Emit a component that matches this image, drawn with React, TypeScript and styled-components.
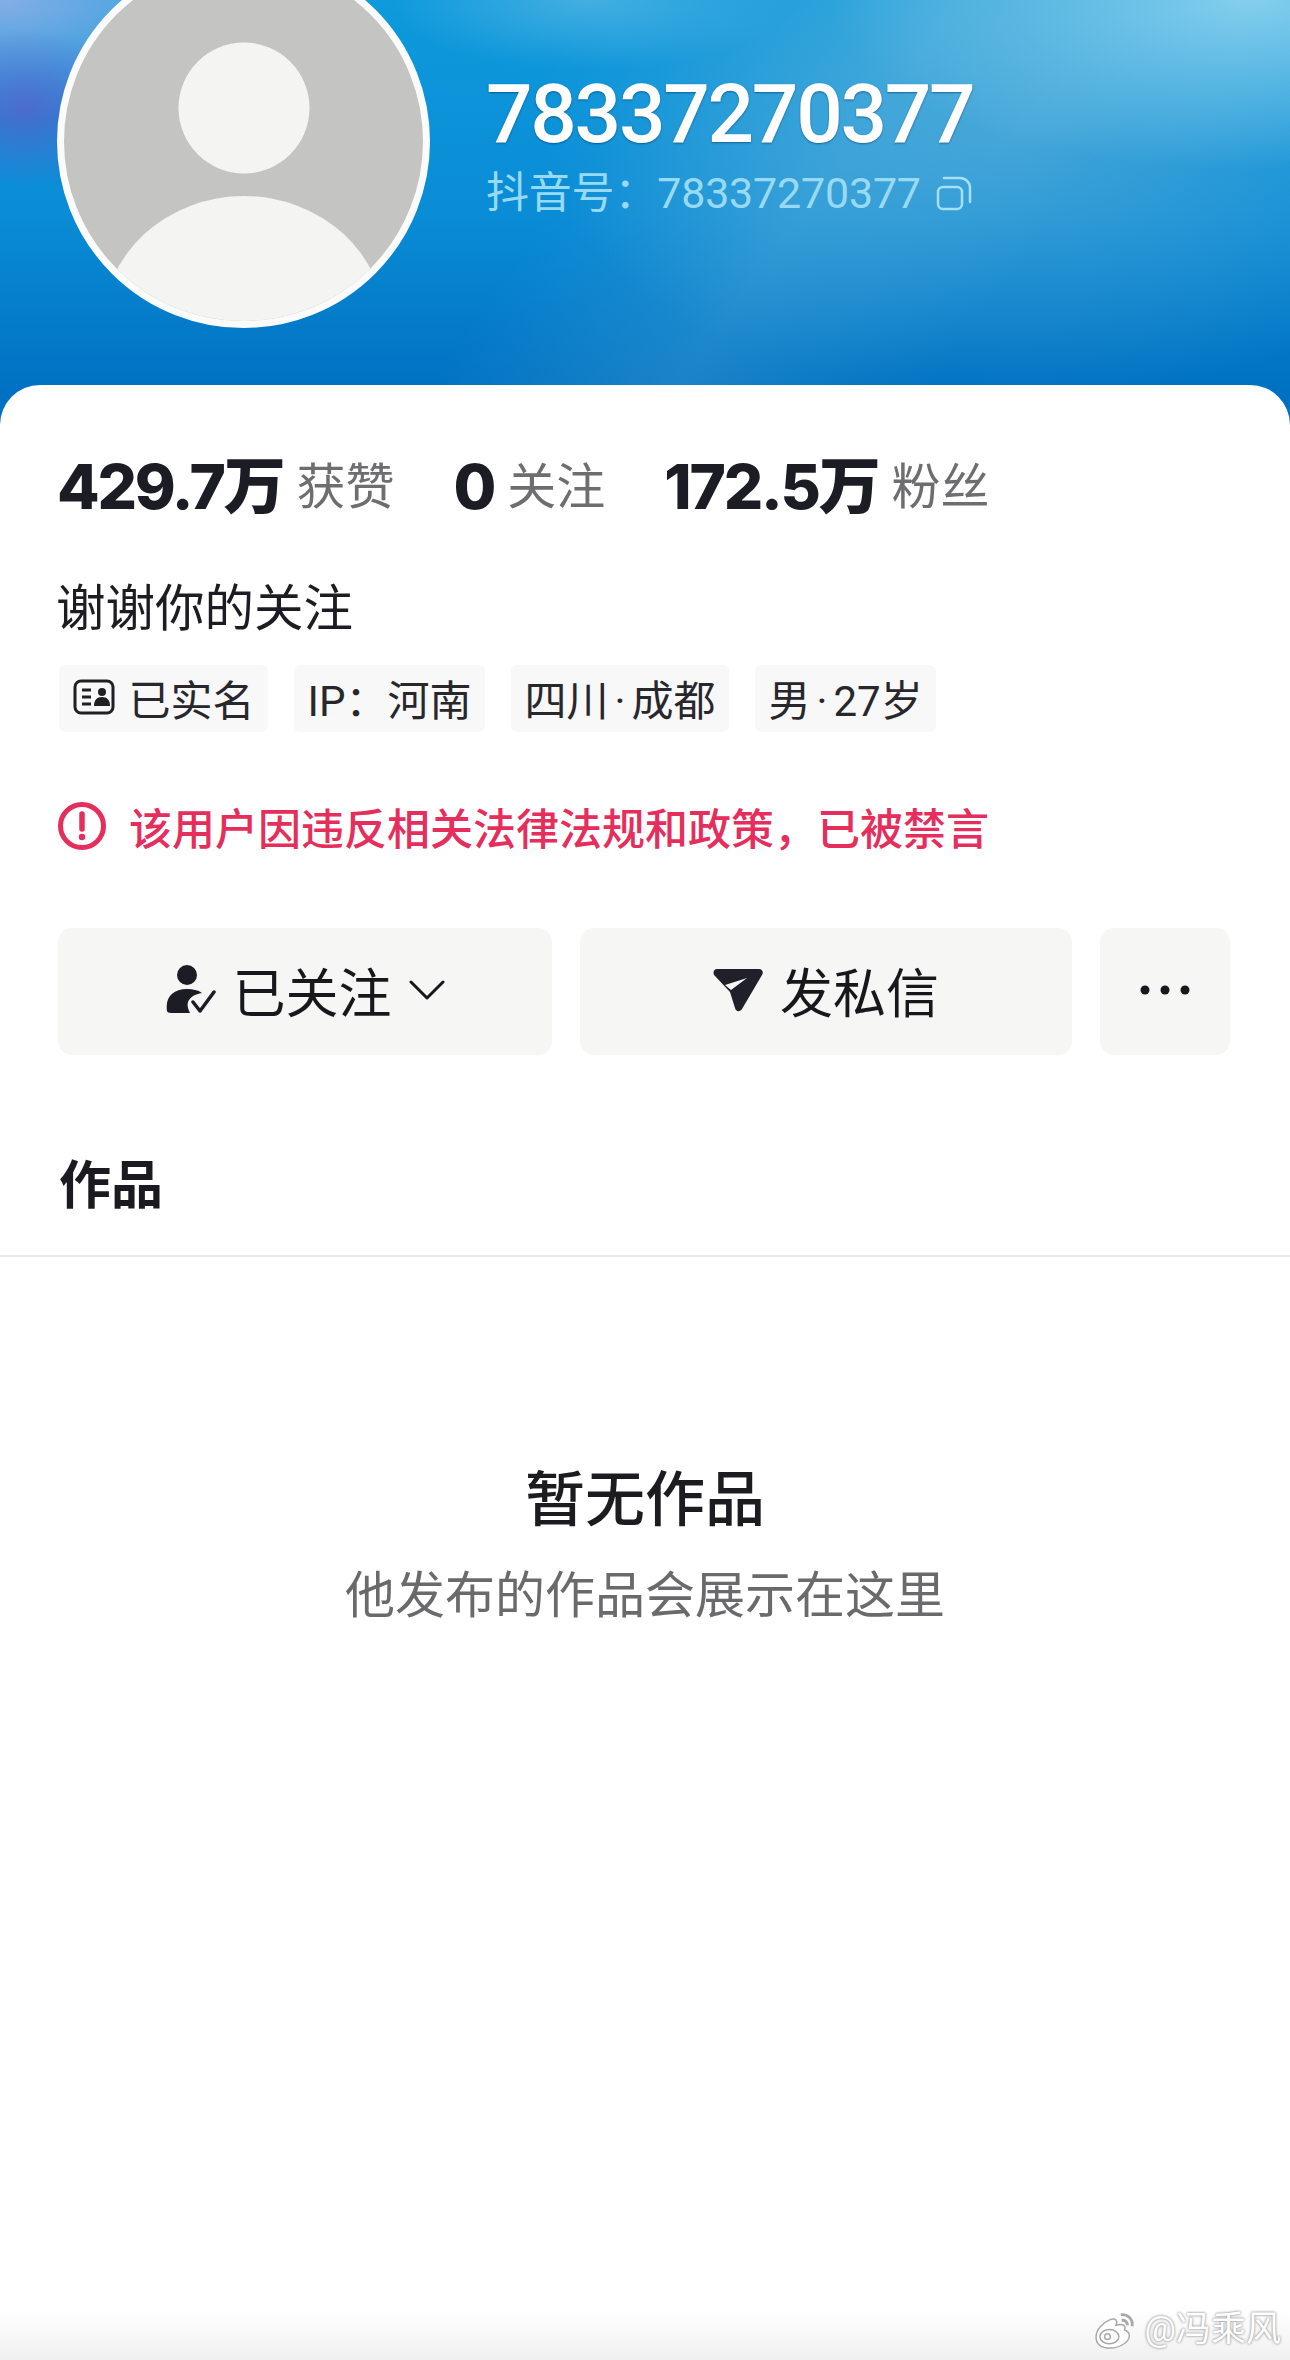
import styled, { createGlobalStyle } from "styled-components";

const GlobalStyle = createGlobalStyle`
  html, body {
    margin: 0;
    padding: 0;
    background: #fff;
    font-family: Roboto, "Noto Sans CJK SC", sans-serif;
  }
  * { box-sizing: border-box; }
`;

const Page = styled.div`
  position: relative;
  width: 1290px;
  height: 2360px;
  overflow: hidden;
  background: #fff;
`;

const Header = styled.header`
  display: flex;
  align-items: flex-start;
  height: 425px;
  padding-left: 57px;
  overflow: hidden;
  background:
    linear-gradient(126deg, transparent 44%, rgba(120, 190, 220, 0.22) 60%, transparent 76%),
    radial-gradient(ellipse 420px 170px at 1250px 0px, rgba(150, 215, 240, 0.85), transparent),
    radial-gradient(ellipse 200px 70px at 590px 0px, rgba(120, 195, 230, 0.5), transparent),
    radial-gradient(ellipse 480px 270px at 1020px 130px, rgba(110, 180, 215, 0.55), transparent),
    radial-gradient(ellipse 120px 80px at 25px 108px, rgba(100, 90, 200, 0.7), transparent),
    radial-gradient(ellipse 300px 120px at 0px 0px, rgba(140, 175, 230, 0.95), transparent),
    linear-gradient(180deg, #0e9adc 0%, #0a8cd6 50%, #0071c2 92%);
`;

const Avatar = styled.div`
  flex: none;
  width: 373px;
  height: 373px;
  margin-top: -45px;
  border: 7px solid #fbfbfb;
  border-radius: 50%;
  overflow: hidden;
  background: #c4c4c2;
  svg {
    display: block;
    width: 100%;
    height: 100%;
  }
`;

const Info = styled.div`
  margin-left: 56px;
  padding-top: 69px;
`;

const Name = styled.h1`
  margin: 0;
  font-size: 82px;
  font-weight: 500;
  line-height: 90px;
  letter-spacing: -2.3px;
  color: #fff;
  text-shadow: 0 1px 2px rgba(0, 40, 90, 0.5);
`;

const AccountRow = styled.div`
  display: flex;
  align-items: center;
  gap: 15px;
  margin-top: 9px;
  font-size: 43px;
  line-height: 50px;
  letter-spacing: -0.2px;
  color: #97daf2;
`;

const Card = styled.main`
  position: relative;
  min-height: 1975px;
  margin-top: -40px;
  padding-top: 72px;
  border-radius: 40px 40px 0 0;
  background: linear-gradient(180deg, #fff 0, #fff 1925px, #f0f0f0 100%);
`;

const Stats = styled.section`
  display: flex;
  align-items: center;
  gap: 59px;
  padding-left: 57px;
  height: 60px;
`;

const Stat = styled.div`
  display: flex;
  align-items: center;
  gap: 13px;
`;

const StatValue = styled.span`
  font-family: Inter, "Noto Sans CJK SC", sans-serif;
  font-size: 62px;
  font-weight: 800;
  line-height: 60px;
  letter-spacing: -2.2px;
  color: #1b1c24;
`;

const StatLabel = styled.span`
  padding-top: 2px;
  font-size: 49px;
  line-height: 60px;
  color: #6e6e70;
`;

const Bio = styled.p`
  margin: 62px 0 0;
  padding-left: 56px;
  font-size: 49.500px;
  line-height: 60px;
  color: #1c1c22;
`;

const Tags = styled.div`
  display: flex;
  gap: 26px;
  margin-top: 26px;
  padding-left: 59px;
`;

const Tag = styled.span`
  display: flex;
  align-items: center;
  gap: 14px;
  height: 67px;
  padding: 0 13.500px 3px;
  border-radius: 6px;
  background: #f8f8f8;
  font-size: 42px;
  color: #27272c;
`;

const Dot = styled.span`
  margin: 0 6px;
`;

const Warning = styled.div`
  display: flex;
  align-items: center;
  gap: 23px;
  height: 50px;
  margin-top: 69px;
  padding-left: 58px;
  font-size: 43px;
  font-weight: 500;
  color: #e62e5c;
`;

const Actions = styled.div`
  display: flex;
  gap: 28px;
  margin-top: 77px;
  padding-left: 58px;
`;

const ActionButton = styled.button<{ $width: number }>`
  display: flex;
  align-items: center;
  justify-content: center;
  gap: 17px;
  width: ${(p) => p.$width}px;
  height: 127px;
  padding: 0 0 3px;
  border: 0;
  border-radius: 14px;
  background: #f6f6f4;
  font-family: inherit;
  font-size: 53px;
  color: #17171c;
`;

const Tabs = styled.nav`
  margin-top: 102px;
  padding: 0 0 38px 59px;
  border-bottom: 2px solid #e9e9e9;
  font-size: 52px;
  font-weight: 700;
  line-height: 60px;
  color: #1a1a20;
`;

const Empty = styled.section`
  display: flex;
  flex-direction: column;
  align-items: center;
  margin-top: 209px;
`;

const EmptyTitle = styled.h2`
  margin: 0;
  font-size: 60px;
  font-weight: 500;
  line-height: 70px;
  color: #1c1c20;
`;

const EmptyText = styled.p`
  margin: 30px 0 0;
  font-size: 50px;
  line-height: 60px;
  color: #6a6a6c;
`;

const Watermark = styled.div`
  position: absolute;
  right: 9px;
  bottom: 5px;
  display: flex;
  align-items: center;
  gap: 6px;
  font-size: 35px;
  line-height: 50px;
  color: #fff;
  text-shadow: 0 0 3px #9a9a9a, 0 0 2px #a8a8a8;
`;

function PersonGlyph() {
  return (
    <svg viewBox="0 0 359 359">
      <circle cx="180" cy="146" r="65.500" fill="#f4f4f2" />
      <ellipse cx="180" cy="364" rx="141" ry="130" fill="#f4f4f2" />
    </svg>
  );
}

function CopyIcon() {
  return (
    <svg width="36" height="35" viewBox="0 0 36 35" fill="none" stroke="#a5e0f5" strokeWidth="2.500">
      <rect x="2" y="11" width="24" height="22" rx="5" />
      <path d="M8 2h16a10 10 0 0 1 10 10v14" strokeLinecap="round" />
    </svg>
  );
}

function IdIcon() {
  return (
    <svg width="42" height="36" viewBox="0 0 42 36" fill="none">
      <rect x="2" y="2" width="38" height="32" rx="6" stroke="#1f1f24" strokeWidth="3" />
      <path d="M9 11h9M9 18h9M9 25h9" stroke="#1f1f24" strokeWidth="3" />
      <circle cx="29" cy="13" r="4" fill="#1f1f24" />
      <path d="M21 27c0-6 3-9 8-9s8 3 8 9z" fill="#1f1f24" />
    </svg>
  );
}

function AlertIcon() {
  return (
    <svg width="48" height="48" viewBox="0 0 48 48" fill="none">
      <circle cx="24" cy="24" r="21.500" stroke="#e62e5c" strokeWidth="5" />
      <path d="M24 12v15" stroke="#e62e5c" strokeWidth="5.500" strokeLinecap="round" />
      <circle cx="24" cy="35" r="3.200" fill="#e62e5c" />
    </svg>
  );
}

function FollowedIcon() {
  return (
    <svg width="50" height="50" viewBox="0 0 50 50" fill="none">
      <circle cx="21" cy="10" r="10" fill="#1b1c24" />
      <path d="M1 46c-2-14 6-22 20-22 6 0 11 1 15 4-7 1-12 4-14 9-1 4 0 7 2 11H5c-2 0-4-1-4-2z" fill="#1b1c24" />
      <path d="M27 37l7 9 14-19" stroke="#1b1c24" strokeWidth="3.500" strokeLinecap="round" strokeLinejoin="round" />
    </svg>
  );
}

function Chevron() {
  return (
    <svg width="36" height="20" viewBox="0 0 36 20" fill="none">
      <path d="M2 2l16 16L34 2" stroke="#17171c" strokeWidth="3" strokeLinecap="round" strokeLinejoin="round" />
    </svg>
  );
}

function SendIcon() {
  return (
    <svg width="50" height="44" viewBox="0 0 50 44">
      <path
        fillRule="evenodd"
        d="M4 1h42c3 0 5 3 3 6L29 41c-2 3-6 3-7-1l-5-16L2 8C-1 5 1 1 4 1zM34 10L12 17l6 5z"
        fill="#1f2029"
      />
    </svg>
  );
}

function DotsIcon() {
  return (
    <svg width="50" height="10" viewBox="0 0 50 10" fill="#17171c">
      <circle cx="5" cy="5" r="4.500" />
      <circle cx="25" cy="5" r="4.500" />
      <circle cx="45" cy="5" r="4.500" />
    </svg>
  );
}

function WeiboIcon() {
  return (
    <svg width="46" height="38" viewBox="0 0 48 40" fill="#fff" stroke="#a8a8a8" strokeWidth="1.500">
      <path d="M3 27c0-7 7-15 15-18 6-2 8 1 6 6 7-2 11 0 9 5 3 1 5 3 5 6 0 6-9 13-20 13S3 34 3 27z" />
      <ellipse cx="17" cy="27" rx="10" ry="7.500" fill="none" />
      <circle cx="15" cy="27" r="3" fill="none" />
      <path d="M29 4c7-1 13 4 12 12M30 10c4-1 6 2 6 5" fill="none" strokeWidth="3" />
    </svg>
  );
}

export default function App() {
  return (
    <Page>
      <GlobalStyle />
      <Header>
        <Avatar>
          <PersonGlyph />
        </Avatar>
        <Info>
          <Name>78337270377</Name>
          <AccountRow>
            <span>{"抖音号\uFF1A78337270377"}</span>
            <CopyIcon />
          </AccountRow>
        </Info>
      </Header>
      <Card>
        <Stats>
          <Stat>
            <StatValue>429.7万</StatValue>
            <StatLabel>获赞</StatLabel>
          </Stat>
          <Stat>
            <StatValue>0</StatValue>
            <StatLabel>关注</StatLabel>
          </Stat>
          <Stat>
            <StatValue>172.5万</StatValue>
            <StatLabel>粉丝</StatLabel>
          </Stat>
        </Stats>
        <Bio>谢谢你的关注</Bio>
        <Tags>
          <Tag>
            <IdIcon />
            已实名
          </Tag>
          <Tag>{"IP\uFF1A河南"}</Tag>
          <Tag>
            <span>
              四川<Dot>·</Dot>成都
            </span>
          </Tag>
          <Tag>
            <span>
              男<Dot>·</Dot>27岁
            </span>
          </Tag>
        </Tags>
        <Warning>
          <AlertIcon />
          {"该用户因违反相关法律法规和政策\uFF0C已被禁言"}
        </Warning>
        <Actions>
          <ActionButton $width={494}>
            <FollowedIcon />
            已关注
            <Chevron />
          </ActionButton>
          <ActionButton $width={492}>
            <SendIcon />
            发私信
          </ActionButton>
          <ActionButton $width={130}>
            <DotsIcon />
          </ActionButton>
        </Actions>
        <Tabs>作品</Tabs>
        <Empty>
          <EmptyTitle>暂无作品</EmptyTitle>
          <EmptyText>他发布的作品会展示在这里</EmptyText>
        </Empty>
      </Card>
      <Watermark>
        <WeiboIcon />
        @冯乘风
      </Watermark>
    </Page>
  );
}
